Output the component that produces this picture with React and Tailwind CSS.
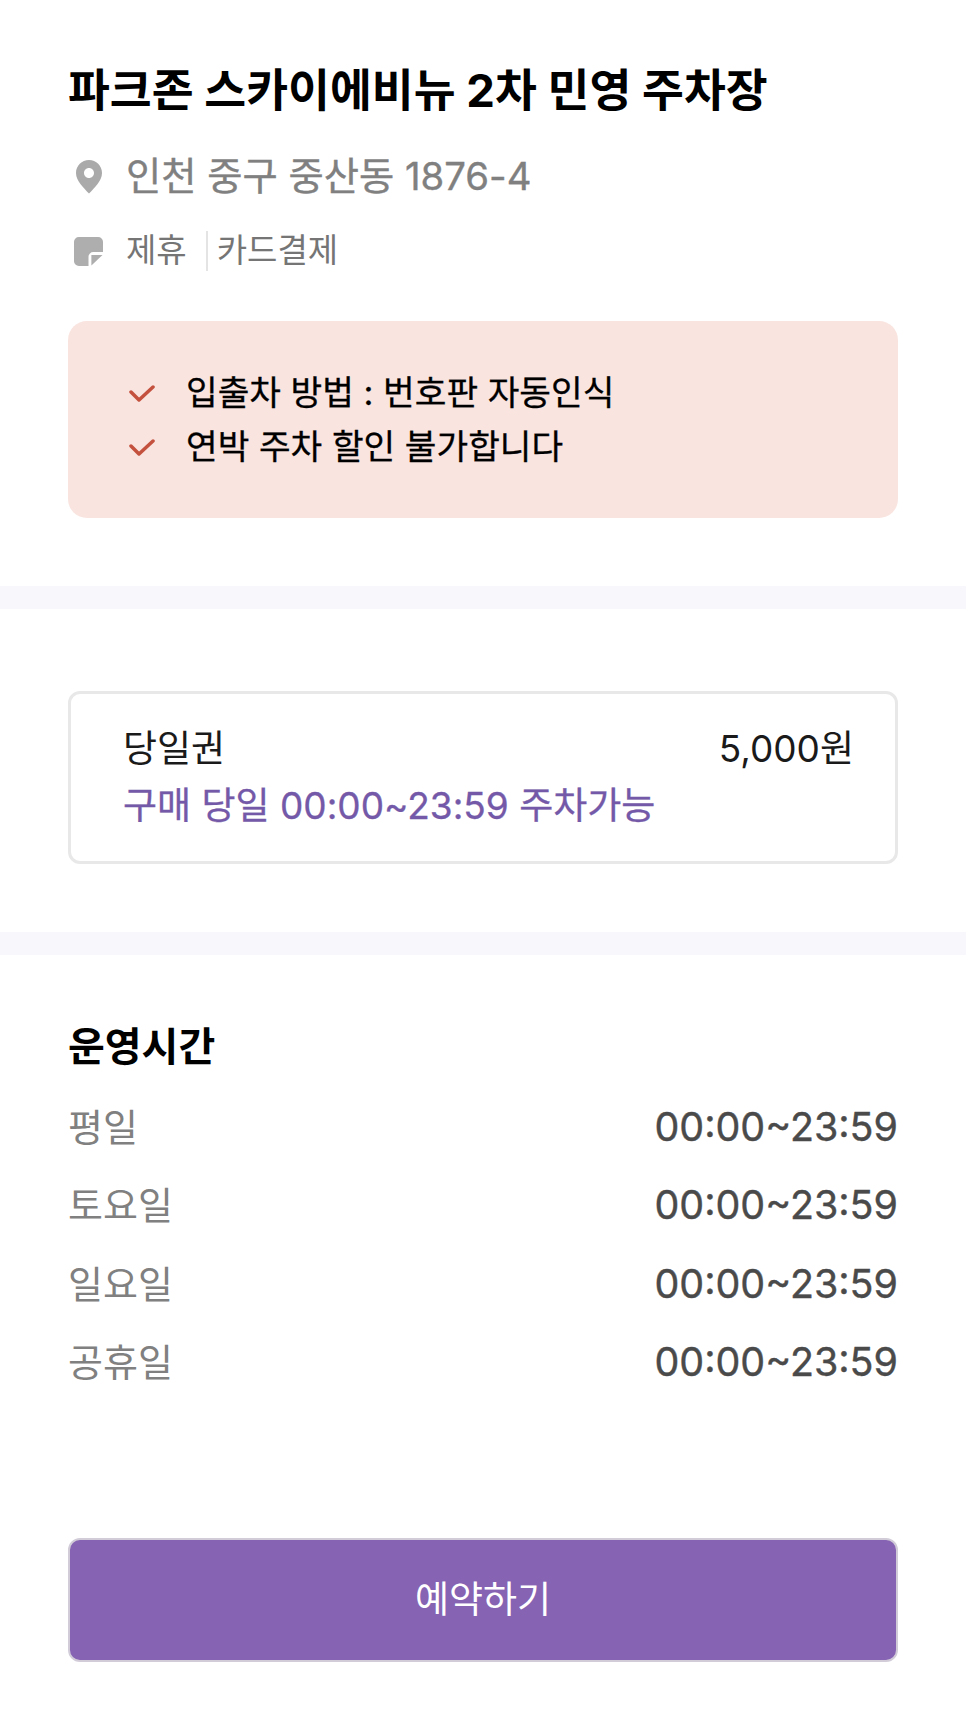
// App.jsx
// Parking lot detail page

import React from 'react'

const font = { fontFamily: 'Inter, "Noto Sans CJK KR", sans-serif' }

const hours = [
  { day: '평일', time: '00:00~23:59' },
  { day: '토요일', time: '00:00~23:59' },
  { day: '일요일', time: '00:00~23:59' },
  { day: '공휴일', time: '00:00~23:59' },
]

const notices = ['입출차 방법 : 번호판 자동인식', '연박 주차 할인 불가합니다']

function PinIcon() {
  return (
    <svg width="28" height="36" viewBox="0 0 28 36" className="shrink-0">
      <path
        fillRule="evenodd"
        fill="#aaaaaa"
        d="M14 1C6.8 1 1 6.8 1 14c0 4.2 1.9 7.7 4.6 11.2C8 28.300 10.800 31.200 14 34.500c3.200-3.300 6-6.200 8.400-9.300C25.100 21.700 27 18.200 27 14 27 6.800 21.200 1 14 1zm0 8c2.800 0 5 2.200 5 5s-2.200 5-5 5-5-2.200-5-5 2.200-5 5-5z"
      />
    </svg>
  )
}

function NoteIcon() {
  return (
    <svg width="29" height="29" viewBox="0 0 30 30" className="shrink-0">
      <path
        fill="#aeaeae"
        d="M5 0h20a5 5 0 0 1 5 5v10.500H20a5 5 0 0 0-5 5V30H5a5 5 0 0 1-5-5V5a5 5 0 0 1 5-5z"
      />
      <path fill="#aeaeae" d="M18 18.500h11.500L18 29.500z" />
    </svg>
  )
}

function CheckIcon() {
  return (
    <svg width="26" height="19" viewBox="0 0 26 19" className="shrink-0">
      <path
        d="M2 8l8 8L24 3"
        fill="none"
        stroke="#c4513d"
        strokeWidth="3.500"
        strokeLinecap="round"
        strokeLinejoin="round"
      />
    </svg>
  )
}

export default function App() {
  return (
    <div style={font} className="w-[966px] h-[1717px] bg-white overflow-hidden">
      <section className="px-[68px] pt-[61px]">
        <h1 className="text-[45.500px] leading-[60px] font-bold text-black">
          파크존 스카이에비뉴 2차 민영 주차장
        </h1>

        <div className="mt-[32px] flex items-center h-[48px]">
          <div className="w-[58px] pl-[7px]">
            <PinIcon />
          </div>
          <span className="text-[38.300px] [-webkit-text-stroke:0.4px_#808080] text-[#808080]">인천 중구 중산동 1876-4</span>
        </div>

        <div className="mt-[30px] flex items-center h-[40px]">
          <div className="w-[58px] pl-[6px]">
            <NoteIcon />
          </div>
          <span className="text-[33px] text-[#757575]">제휴</span>
          <span className="ml-[19px] mr-[9px] h-[40px] w-[2px] bg-[#e4e4e4]" />
          <span className="text-[33px] text-[#757575]">카드결제</span>
        </div>

        <div className="mt-[50px] h-[197px] rounded-[19px] bg-[#f9e4e0] pl-[61px] pt-[45px]">
          {notices.map((n) => (
            <div key={n} className="flex items-center h-[54px]">
              <div className="w-[57px]">
                <CheckIcon />
              </div>
              <span className="text-[34.400px] [-webkit-text-stroke:0.3px_#000000] text-black">{n}</span>
            </div>
          ))}
        </div>
      </section>

      <div className="mt-[68px] h-[23px] bg-[#f8f8fc]" />

      <section className="px-[68px] pt-[82px]">
        <div className="h-[173px] rounded-[12px] border-[3px] border-[#e8e8e8] pl-[52px] pr-[41px] pt-[28px]">
          <div className="flex justify-between items-center h-[54px] text-[37px] text-[#1a1a1a]">
            <span>당일권</span>
            <span>5,000원</span>
          </div>
          <div className="mt-[3px] text-[37px] leading-[54px] [-webkit-text-stroke:0.3px_#7459a8] text-[#7459a8]">
            구매 당일 00:00~23:59 주차가능
          </div>
        </div>
      </section>

      <div className="mt-[68px] h-[23px] bg-[#f8f8fc]" />

      <section className="px-[68px] pt-[62px]">
        <h2 className="text-[40px] leading-[60px] font-bold text-black">운영시간</h2>
        <div className="mt-[11px] flex flex-col">
          {hours.map((h) => (
            <div key={h.day} className="flex justify-between items-center h-[78.500px]">
              <span className="text-[38px] text-[#808080]">{h.day}</span>
              <span className="text-[39.400px] [-webkit-text-stroke:0.4px_#4a4a4a] text-[#4a4a4a]">{h.time}</span>
            </div>
          ))}
        </div>
      </section>

      <div className="px-[68px] mt-[136px]">
        <button className="w-full h-[124px] rounded-[12px] border-[2px] border-[#d2ccd9] bg-[#8663b3] text-[37px] text-white">
          예약하기
        </button>
      </div>
    </div>
  )
}
